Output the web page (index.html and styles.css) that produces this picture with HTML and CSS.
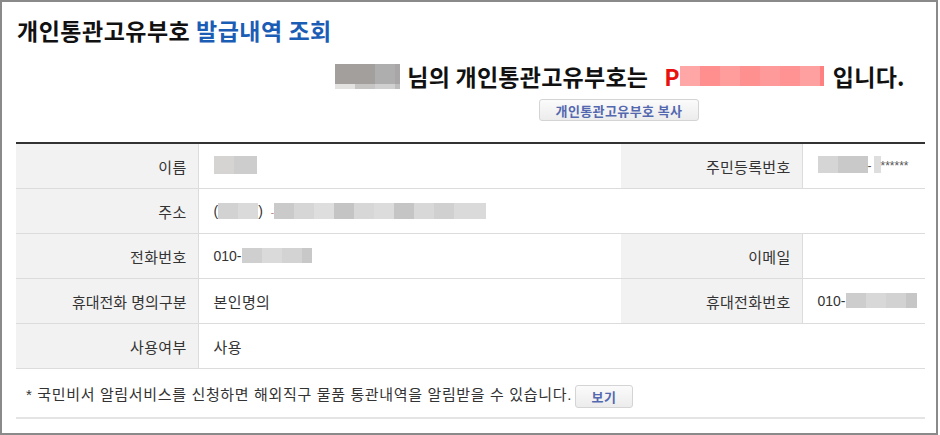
FILE: index.html
```
<!DOCTYPE html>
<html>
<head>
    <title>개인통관고유부호 발급내역 조회</title>
    <meta charset="utf-8" />
    <link rel="stylesheet" href="styles.css">
</head>
<body>
    <div class="wrap">
        <h1 class="title">개인통관고유부호 <span class="blue">발급내역 조회</span></h1>

        <div class="result">
            <p class="result-line">
                <span class="blur-name"><i class="b1"></i><i class="b2"></i><i class="b3"></i></span>
                님의 개인통관고유부호는
                <span class="pcode">P</span><span class="blur-code"></span>
                입니다.
            </p>
            <button type="button" class="btn copybtn">개인통관고유부호 복사</button>
        </div>

        <table class="info">
            <colgroup>
                <col class="c-th1">
                <col class="c-td1">
                <col class="c-th2">
                <col class="c-td2">
            </colgroup>
            <tbody>
                <tr>
                    <th>이름</th>
                    <td><span class="blur blur-n1"></span><span class="blur blur-n2"></span></td>
                    <th>주민등록번호</th>
                    <td class="small"><span class="blur blur-r1"></span><span class="blur blur-r2"></span>-<span class="blur blur-r3"></span>******</td>
                </tr>
                <tr>
                    <th>주소</th>
                    <td colspan="3">(<span class="blur blur-zip"></span>)&nbsp;&nbsp;<span class="dash">-</span><span class="blur blur-addr"></span></td>
                </tr>
                <tr>
                    <th>전화번호</th>
                    <td>010-<span class="blur blur-tel"></span></td>
                    <th>이메일</th>
                    <td></td>
                </tr>
                <tr>
                    <th class="tight">휴대전화 명의구분</th>
                    <td class="ko">본인명의</td>
                    <th>휴대전화번호</th>
                    <td>010-<span class="blur blur-tel2"></span></td>
                </tr>
                <tr>
                    <th>사용여부</th>
                    <td class="ko" colspan="3">사용</td>
                </tr>
            </tbody>
        </table>

        <div class="notice">
            * 국민비서 알림서비스를 신청하면 해외직구 물품 통관내역을 알림받을 수 있습니다.
            <button type="button" class="btn viewbtn">보기</button>
        </div>
    </div>
</body>
</html>
```

FILE: styles.css
```
html, body {
    margin: 0;
    padding: 0;
    background: #fff;
}

body {
    font-family: "Liberation Sans", "Noto Sans CJK KR", sans-serif;
    color: #222;
}

.wrap {
    width: 934px;
    height: 431px;
    border: 2px solid #8a8a8a;
    padding: 0;
}

.title {
    margin: 0;
    padding: 13px 0 0 15px;
    font-family: "Noto Sans CJK KR", sans-serif;
    font-size: 23px;
    letter-spacing: 0.5px;
    line-height: 30px;
    font-weight: bold;
    color: #111;
}

    .title .blue {
        color: #1b5db5;
    }

.result {
    display: flex;
    flex-direction: column;
    align-items: center;
    margin-left: auto;
    width: 566px;
    margin-right: 33px;
    padding-top: 16px;
}

.result-line {
    margin: 0;
    font-family: "Noto Sans CJK KR", sans-serif;
    font-size: 23px;
    letter-spacing: 0.25px;
    line-height: 30px;
    font-weight: bold;
    color: #111;
    white-space: nowrap;
    display: flex;
    align-items: center;
    gap: 7px;
}

.blur-name {
    display: inline-flex;
    flex-wrap: wrap;
    width: 65px;
    height: 25px;
    background: #a09d9b;
    position: relative;
}

    .blur-name i {
        display: block;
        height: 20px;
    }

    .blur-name .b1 { width: 40px; background: #a29f9d; }
    .blur-name .b2 { width: 20px; background: #aeaeae; }
    .blur-name .b3 { width: 5px; background: #a8a6a6; }

    .blur-name::after {
        content: "";
        position: absolute;
        left: 0;
        bottom: 0;
        width: 65px;
        height: 5px;
        background: linear-gradient(to right, #e3e2e1 0, #e3e2e1 20px, #c6c5c4 20px, #c6c5c4 40px, #d0d0d0 40px, #d0d0d0 60px, #bdbdbd 60px);
    }

.pcode {
    color: #e8110f;
    margin-left: 9px;
    margin-right: -7px;
}

.blur-code {
    display: inline-block;
    width: 144px;
    height: 20px;
    margin-right: 2px;
    background: linear-gradient(to right, #ffa6a6 0, #ffa6a6 20px, #ff8f8f 20px, #ff8f8f 40px, #ff9d9d 40px, #ff9d9d 60px, #ff9090 60px, #ff9090 80px, #ff9a9a 80px, #ff9a9a 100px, #ff9393 100px, #ff9393 120px, #ffa0a0 120px, #ffa0a0 140px, #ff8080 140px);
}

.btn {
    font-family: "Noto Sans CJK KR", sans-serif;
    font-weight: bold;
    font-size: 13px;
    letter-spacing: 0.4px;
    color: #5468b0;
    background: linear-gradient(#fbfbfb, #ececec);
    border: 1px solid #d4d4d4;
    border-radius: 3px;
    padding: 0;
    cursor: pointer;
}

.copybtn {
    width: 160px;
    height: 22px;
    margin-top: 8px;
    margin-right: 2px;
}

.info {
    width: 909px;
    margin: 21px 0 0 14px;
    border-collapse: collapse;
    table-layout: fixed;
    border-top: 2px solid #333;
    font-size: 15px;
    font-family: "Liberation Sans", "Noto Sans CJK KR", sans-serif;
}

.c-th1 { width: 182px; }
.c-td1 { width: 423px; }
.c-th2 { width: 181px; }
.c-td2 { width: 123px; }

.info th,
.info td {
    height: 44px;
    padding: 0;
    border-bottom: 1px solid #dcdcdc;
    font-weight: normal;
    color: #333;
    white-space: nowrap;
}

.info th {
    background: #f2f2f2;
    text-align: right;
    padding-right: 11px;
    border-right: 1px solid #dcdcdc;
    letter-spacing: 0.3px;
}

.info th.tight {
    letter-spacing: 0;
}

.info td {
    padding-left: 15px;
    font-size: 14px;
}

.info td.ko {
    font-size: 15px;
    letter-spacing: 0.4px;
}

.info td.small {
    font-size: 12px;
    color: #555;
}

.blur {
    display: inline-block;
    vertical-align: middle;
    height: 18px;
    margin-top: -3px;
}

.blur-n1 { width: 20px; background: #d6d3d3; }
.blur-n2 { width: 23px; background: #cdcdcd; }
.blur-r1 { width: 20px; height: 17px; background: #d5d5d5; }
.blur-r2 { width: 30px; height: 17px; background: #c9c9c9; }
.blur-r3 { width: 7px; height: 17px; background: #dedede; margin-left: 2px; }

.blur-zip {
    width: 40px;
    height: 16px;
    background: linear-gradient(to right, #d2d2d2 0, #d2d2d2 20px, #dadada 20px);
}

.dash {
    color: #c08080;
    font-size: 10px;
}

.blur-addr {
    width: 212px;
    height: 16px;
    background: linear-gradient(to right, #cacaca 0, #cacaca 20px, #d6d6d6 20px, #d6d6d6 40px, #dedede 40px, #dedede 60px, #c4c4c4 60px, #c4c4c4 80px, #d7d7d7 80px, #d7d7d7 100px, #dcdcdc 100px, #dcdcdc 120px, #c5c5c5 120px, #c5c5c5 140px, #d8d8d8 140px, #d8d8d8 160px, #d0d0d0 160px, #d0d0d0 180px, #dadada 180px);
}

.blur-tel {
    width: 70px;
    height: 15px;
    background: linear-gradient(to right, #cfcfcf 0, #cfcfcf 20px, #dadada 20px, #dadada 40px, #d3d3d3 40px, #d3d3d3 60px, #c8c8c8 60px);
}

.blur-tel2 {
    width: 71px;
    height: 15px;
    background: linear-gradient(to right, #cdcdcd 0, #cdcdcd 20px, #d8d8d8 20px, #d8d8d8 40px, #d2d2d2 40px, #d2d2d2 60px, #c6c6c6 60px);
}

.notice {
    width: 909px;
    margin-left: 14px;
    height: 50px;
    box-sizing: border-box;
    padding-left: 10px;
    border-bottom: 2px solid #e4e4e4;
    display: flex;
    align-items: center;
    gap: 3px;
    font-family: "Liberation Sans", "Noto Sans CJK KR", sans-serif;
    font-size: 15px;
    letter-spacing: 0.65px;
    color: #333;
}

.viewbtn {
    width: 58px;
    height: 23px;
    margin-top: 7px;
}
```
